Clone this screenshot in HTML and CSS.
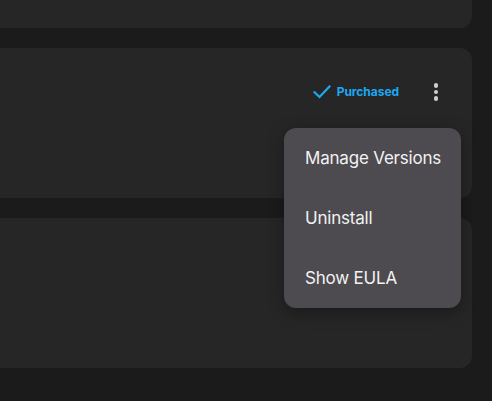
FILE: index.html
```html
<!DOCTYPE html>
<html>
<head>
<meta charset="utf-8">
<link rel="stylesheet" href="styles.css">
</head>
<body>
<div class="list">
  <div class="card card-top"></div>
  <div class="card card-main">
    <div class="actions">
      <div class="owned">
        <svg class="check" width="18" height="14" viewBox="0 0 18 14"><path d="M1.5 7.2 L6.5 12 L16.5 1.5" fill="none" stroke="#1ba9f5" stroke-width="2.2" stroke-linecap="square"/></svg>
        <span class="owned-label">Purchased</span>
      </div>
      <div class="kebab"><span></span><span></span><span></span></div>
    </div>
    <div class="menu">
      <div class="menu-item">Manage Versions</div>
      <div class="menu-item">Uninstall</div>
      <div class="menu-item">Show EULA</div>
    </div>
  </div>
  <div class="card"></div>
</div>
</body>
</html>
```
FILE: styles.css
```css
html, body {
  margin: 0;
  padding: 0;
  background: #1b1b1b;
  width: 492px;
  height: 401px;
  overflow: hidden;
  font-family: Inter, "Noto Sans", sans-serif;
}
.list {
  display: flex;
  flex-direction: column;
  gap: 20px;
  margin-top: -122px;
  margin-left: -20px;
  width: 492px;
}
.card {
  height: 150px;
  background: #262626;
  border-radius: 12px;
  position: relative;
}
.card-main { z-index: 2; }
.actions {
  display: flex;
  align-items: center;
  justify-content: flex-end;
  padding-top: 35px;
  padding-right: 27px;
  gap: 28px;
}
.owned {
  display: flex;
  align-items: center;
  gap: 6px;
}
.check { display: block; }
.owned-label {
  color: #1ba9f5;
  font-size: 12px;
  font-weight: 700;
  letter-spacing: -0.05px;
}
.kebab {
  display: flex;
  flex-direction: column;
  gap: 2px;
  width: 18px;
  align-items: center;
}
.kebab span {
  width: 4.5px;
  height: 4.5px;
  border-radius: 50%;
  background: #cfcfcf;
}
.menu {
  position: absolute;
  left: 304px;
  top: 80px;
  width: 177px;
  background: #4d4b4f;
  border-radius: 12px;
  box-shadow: 0 4px 16px rgba(0,0,0,0.35);
  display: flex;
  flex-direction: column;
}
.menu-item {
  height: 60px;
  display: flex;
  align-items: center;
  padding-left: 21px;
  color: #f2f2f2;
  font-size: 17px;
  letter-spacing: -0.2px;
}
```
